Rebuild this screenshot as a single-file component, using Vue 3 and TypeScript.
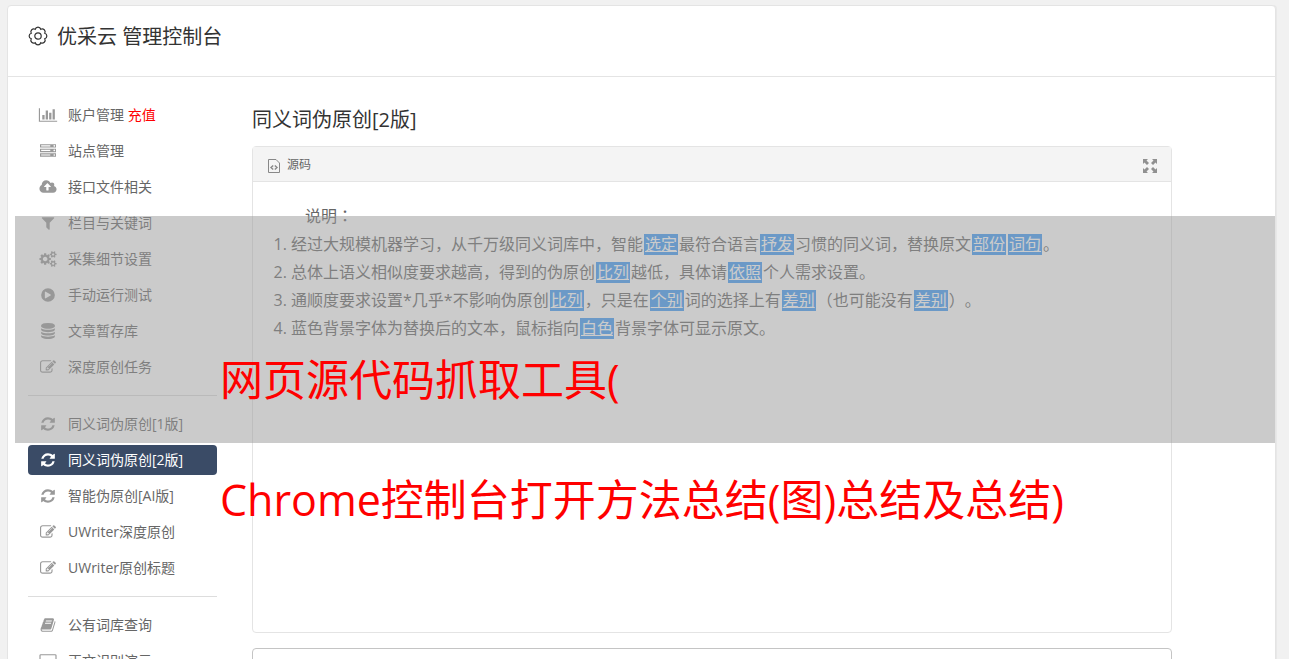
<script setup lang="ts">
interface Glyph { w: number; d: string }
interface MenuItem { label: string; icon: string; tag?: string; active?: boolean }
interface Piece { text: string; mark: boolean }

const glyphs: Record<string, Glyph> = {
  chart: { w: 2048, d: 'M640 896v512h-256v-512h256zm384-512v1024h-256v-1024h256zm1024 1152v128h-2048v-1536h128v1408h1920zm-640-896v768h-256v-768h256zm384-384v1152h-256v-1152h256z' },
  server: { w: 1792, d: 'M128 1408h1024v-128h-1024v128zm0-512h1024v-128h-1024v128zm1568 448q0-40-28-68t-68-28-68 28-28 68 28 68 68 28 68-28 28-68zm-1568-960h1024v-128h-1024v128zm1568 448q0-40-28-68t-68-28-68 28-28 68 28 68 68 28 68-28 28-68zm0-512q0-40-28-68t-68-28-68 28-28 68 28 68 68 28 68-28 28-68zm96 832v384h-1792v-384h1792zm0-512v384h-1792v-384h1792zm0-512v384h-1792v-384h1792z' },
  cloud: { w: 1920, d: 'M1280 864q0-14-9-23l-352-352q-9-9-23-9t-23 9l-351 351q-10 12-10 24 0 14 9 23t23 9h224v352q0 13 9.500 22.500t22.500 9.500h192q13 0 22.500-9.500t9.500-22.500v-352h224q13 0 22.500-9.500t9.500-22.500zm640 288q0 159-112.500 271.500t-271.500 112.500h-1088q-185 0-316.500-131.500t-131.500-316.500q0-130 70-240t188-165q-2-30-2-43 0-212 150-362t362-150q156 0 285.500 87t188.500 231q71-62 166-62 106 0 181 75t75 181q0 76-41 138 130 31 213.500 135.500t83.500 238.500z' },
  filter: { w: 1792, d: 'M1595 295q17 41-14 70l-493 493v742q0 42-39 59-13 5-25 5-27 0-45-19l-256-256q-19-19-19-45v-486l-493-493q-31-29-14-70 17-39 59-39h1280q42 0 59 39z' },
  cogs: { w: 1920, d: 'M896 896q0-106-75-181t-181-75-181 75-75 181 75 181 181 75 181-75 75-181zm768 512q0-52-38-90t-90-38-90 38-38 90q0 53 37.500 90.500t90.500 37.500 90.500-37.500 37.500-90.500zm0-1024q0-52-38-90t-90-38-90 38-38 90q0 53 37.500 90.500t90.500 37.500 90.500-37.500 37.500-90.500zm-384 421v185q0 10-7 19.500t-16 10.500l-155 24q-11 35-32 76 34 48 90 115 7 10 7 20 0 12-7 19-23 30-82.500 89.500t-78.500 59.500q-11 0-21-7l-115-90q-37 19-77 31-11 108-23 155-7 24-30 24h-186q-11 0-20-7.500t-10-17.500l-23-153q-34-10-75-31l-118 89q-7 7-20 7-11 0-21-8-144-133-144-160 0-9 7-19 10-14 41-53t47-61q-23-44-35-82l-152-24q-10-1-17-9.500t-7-19.500v-185q0-10 7-19.500t16-10.500l155-24q11-35 32-76-34-48-90-115-7-11-7-20 0-12 7-20 22-30 82-89t79-59q11 0 21 7l115 90q34-18 77-32 11-108 23-154 7-24 30-24h186q11 0 20 7.500t10 17.500l23 153q34 10 75 31l118-89q8-7 20-7 11 0 21 8 144 133 144 160 0 9-7 19-12 16-42 54t-45 60q23 48 34 82l152 23q10 2 17 10.500t7 19.500zm640 533v140q0 16-149 31-12 27-30 52 51 113 51 138 0 4-4 7-122 71-124 71-8 0-46-47t-52-68q-20 2-30 2t-30-2q-14 21-52 68t-46 47q-2 0-124-71-4-3-4-7 0-25 51-138-18-25-30-52-149-15-149-31v-140q0-16 149-31 13-29 30-52-51-113-51-138 0-4 4-7 4-2 35-20t59-34 30-16q8 0 46 46.500t52 67.500q20-2 30-2t30 2q51-71 92-112l6-2q4 0 124 70 4 3 4 7 0 25-51 138 17 23 30 52 149 15 149 31zm0-1024v140q0 16-149 31-12 27-30 52 51 113 51 138 0 4-4 7-122 71-124 71-8 0-46-47t-52-68q-20 2-30 2t-30-2q-14 21-52 68t-46 47q-2 0-124-71-4-3-4-7 0-25 51-138-18-25-30-52-149-15-149-31v-140q0-16 149-31 13-29 30-52-51-113-51-138 0-4 4-7 4-2 35-20t59-34 30-16q8 0 46 46.500t52 67.500q20-2 30-2t30 2q51-71 92-112l6-2q4 0 124 70 4 3 4 7 0 25-51 138 17 23 30 52 149 15 149 31z' },
  play: { w: 1792, d: 'M896 128a768 768 0 1 1 0 1536a768 768 0 1 1 0-1536zM1184 951q32-18 32-55t-32-55l-544-320q-31-19-64-1-32 19-32 56v640q0 37 32 56 16 8 32 8 17 0 32-9z' },
  database: { w: 1792, d: 'M896 768q237 0 443-43t325-127v170q0 69-103 128t-280 93.500-385 34.500-385-34.500-280-93.500-103-128v-170q119 84 325 127t443 43zm0 768q237 0 443-43t325-127v170q0 69-103 128t-280 93.500-385 34.500-385-34.500-280-93.500-103-128v-170q119 84 325 127t443 43zm0-384q237 0 443-43t325-127v170q0 69-103 128t-280 93.500-385 34.500-385-34.500-280-93.500-103-128v-170q119 84 325 127t443 43zm0-1152q208 0 385 34.500t280 93.500 103 128v128q0 69-103 128t-280 93.500-385 34.500-385-34.500-280-93.500-103-128v-128q0-69 103-128t280-93.500 385-34.500z' },
  edit: { w: 1792, d: 'M888 1184l116-116-152-152-116 116v56h96v96h56zm440-720q-16-16-33 1l-350 350q-17 17-1 33t33-1l350-350q17-17 1-33zm80 594v190q0 119-84.500 203.500t-203.500 84.500h-832q-119 0-203.500-84.500t-84.500-203.500v-832q0-119 84.500-203.500t203.500-84.500h832q63 0 117 25 15 7 18 23 3 17-9 29l-49 49q-14 14-32 8-23-6-45-6h-832q-66 0-113 47t-47 113v832q0 66 47 113t113 47h832q66 0 113-47t47-113v-126q0-13 9-22l64-64q15-15 35-7t20 29zm-96-738l288 288-672 672h-288v-288zm444 132l-92 92-288-288 92-92q28-28 68-28t68 28l152 152q28 28 28 68t-28 68z' },
  refresh: { w: 1792, d: 'M1639 1056q0 5-1 7-64 268-268 434.500t-478 166.500q-146 0-282.500-55t-243.500-157l-129 129q-19 19-45 19t-45-19-19-45v-448q0-26 19-45t45-19h448q26 0 45 19t19 45-19 45l-137 137q71 66 161 102t187 36q134 0 250-65t186-179q11-17 53-117 8-23 30-23h192q13 0 22.500 9.500t9.500 22.500zm25-800v448q0 26-19 45t-45 19h-448q-26 0-45-19t-19-45 19-45l138-138q-148-137-349-137-134 0-250 65t-186 179q-11 17-53 117-8 23-30 23h-199q-13 0-22.500-9.500t-9.500-22.500v-7q65-268 270-434.500t480-166.500q146 0 284 55.500t245 156.500l130-129q19-19 45-19t45 19 19 45z' },
  book: { w: 1792, d: 'M1703 478q40 57 18 129l-275 906q-19 64-76.500 107.500t-122.500 43.500h-923q-77 0-148.500-53.500t-99.500-131.500q-24-67-2-127 0-4 3-27t4-37q1-8-3-21.500t-3-19.500q2-11 8-21t16.500-23.500 16.500-23.500q23-38 45-91.500t30-91.500q3-10 .5-30t-.5-28q3-11 17-28t17-23q21-36 42-92t25-90q1-9-2.500-32t.5-28q4-13 22-30.500t22-22.500q19-26 42.500-84.500t27.500-96.500q1-8-3-25.500t-2-26.500q2-8 9-18t18-23 17-21q8-12 16.500-30.500t15-35 16-36 19.500-32 26.500-23.500 36-11.500 47.500 5.500l-1 3q38-9 51-9h761q74 0 114 56t18 130l-274 906q-36 119-71.500 153.500t-128.500 34.500h-869q-27 0-38 15-11 16-1 43 24 70 144 70h923q29 0 56-15.500t35-41.500l300-987q7-22 5-57 38 15 59 43zm-1064 2q-4 13 2 22.500t20 9.500h608q13 0 25.500-9.500t16.500-22.500l21-64q4-13-2-22.500t-20-9.500h-608q-13 0-25.500 9.500t-16.500 22.500zm-83 256q-4 13 2 22.500t20 9.500h608q13 0 25.500-9.500t16.500-22.500l21-64q4-13-2-22.500t-20-9.500h-608q-13 0-25.500 9.500t-16.500 22.500z' },
  screen: { w: 1920, d: 'M160 128h1600q66 0 113 47t47 113v1088q0 66-47 113t-113 47h-1600q-66 0-113-47t-47-113v-1088q0-66 47-113t113-47zM160 256q-32 0-32 32v1088q0 32 32 32h1600q32 0 32-32v-1088q0-32-32-32z' },
}

const groups: MenuItem[][] = [
  [
    { label: '账户管理', icon: 'chart', tag: '充值' },
    { label: '站点管理', icon: 'server' },
    { label: '接口文件相关', icon: 'cloud' },
    { label: '栏目与关键词', icon: 'filter' },
    { label: '采集细节设置', icon: 'cogs' },
    { label: '手动运行测试', icon: 'play' },
    { label: '文章暂存库', icon: 'database' },
    { label: '深度原创任务', icon: 'edit' },
  ],
  [
    { label: '同义词伪原创[1版]', icon: 'refresh' },
    { label: '同义词伪原创[2版]', icon: 'refresh', active: true },
    { label: '智能伪原创[AI版]', icon: 'refresh' },
    { label: 'UWriter深度原创', icon: 'edit' },
    { label: 'UWriter原创标题', icon: 'edit' },
  ],
  [
    { label: '公有词库查询', icon: 'book' },
    { label: '正文识别演示', icon: 'screen' },
  ],
]

// Words wrapped in braces are the replaced synonyms.
const parse = (line: string): Piece[] =>
  line.split(/(\{.+?\})/).filter(Boolean).map((s) =>
    s.startsWith('{') ? { text: s.slice(1, -1), mark: true } : { text: s, mark: false })

const notes: Piece[][] = [
  '经过大规模机器学习，从千万级同义词库中，智能{选定}最符合语言{抒发}习惯的同义词，替换原文{部份}{词句}。',
  '总体上语义相似度要求越高，得到的伪原创{比列}越低，具体请{依照}个人需求设置。',
  '通顺度要求设置*几乎*不影响伪原创{比列}，只是在{个别}词的选择上有{差别}（也可能没有{差别}）。',
  '蓝色背景字体为替换后的文本，鼠标指向{白色}背景字体可显示原文。',
].map(parse)

// Scalloped gear outline.
const lobes = 8
const gear = Array.from({ length: lobes }, (_, i) => {
  const at = (k: number) => {
    const a = ((k - 0.5) / lobes) * Math.PI * 2 - Math.PI / 2
    return `${(10 + 7.3 * Math.cos(a)).toFixed(2)} ${(10 + 7.3 * Math.sin(a)).toFixed(2)}`
  }
  return `${i === 0 ? `M${at(0)}` : ''}A2.9 2.9 0 0 1 ${at(i + 1)}`
}).join('') + 'z'
</script>

<template>
  <div class="page">
    <div class="card">
      <header class="head">
        <svg class="gear" viewBox="0 0 20 20" aria-hidden="true">
          <path :d="gear" />
          <circle cx="10" cy="10" r="3.2" />
        </svg>
        <h1>优采云 管理控制台</h1>
      </header>
      <div class="body">
        <nav class="side">
          <ul v-for="(group, g) in groups" :key="g">
            <li v-for="item in group" :key="item.label">
              <a href="#" :class="{ active: item.active }">
                <svg class="icon" :viewBox="`0 0 ${glyphs[item.icon].w} 1792`" aria-hidden="true">
                  <path fill-rule="evenodd" :d="glyphs[item.icon].d" />
                </svg>
                <span>{{ item.label }} <em v-if="item.tag">{{ item.tag }}</em></span>
              </a>
            </li>
          </ul>
        </nav>
        <main class="main">
          <h2>同义词伪原创[2版]</h2>
          <section class="panel">
            <div class="bar">
              <svg class="code" viewBox="0 0 12 14" aria-hidden="true">
                <path d="M.5.5h7.500l3.500 3.500v9.500h-11z" />
                <path class="angle" d="M5.200 6.500L3 8.500l2.200 2M6.800 6.500L9 8.500l-2.200 2" />
              </svg>
              <span>源码</span>
              <button type="button" aria-label="全屏">
                <svg viewBox="0 0 14 14" aria-hidden="true">
                  <path d="M0 0h5L3.500 1.500 6 4 4 6 1.500 3.500 0 5zM14 0v5l-1.500-1.500L10 6 8 4l2.500-2.500L9 0zM0 14V9l1.500 1.500L4 8l2 2-2.500 2.500L5 14zM14 14H9l1.500-1.500L8 10l2-2 2.500 2.500L14 9z" />
                </svg>
              </button>
            </div>
            <div class="content">
              <p>说明<span class="punct">：</span></p>
              <ol>
                <li v-for="(note, n) in notes" :key="n">
                  <template v-for="(piece, k) in note" :key="k"><u v-if="piece.mark">{{ piece.text }}</u><template v-else>{{ piece.text }}</template></template>
                </li>
              </ol>
            </div>
          </section>
          <textarea aria-label="内容"></textarea>
        </main>
      </div>
    </div>
    <div class="banner">
      <p>网页源代码抓取工具(</p>
      <p>Chrome控制台打开方法总结(图)总结及总结)</p>
    </div>
  </div>
</template>

<style>
body {
  margin: 0;
  background: #f1f1f1;
}
</style>

<style scoped>
* {
  box-sizing: border-box;
}
.page {
  position: relative;
  max-height: 100vh;
  overflow: hidden;
  padding: 5px 13px 0 7px;
  font-family: "Open Sans", "Noto Sans CJK SC", sans-serif;
  color: #666;
  font-size: 14px;
  text-spacing-trim: space-all;
}
.card {
  background: #fff;
  border: 1px solid #e4e4e4;
  border-radius: 4px;
  box-shadow: 1px 0 0 #e8e8e8;
}
h1, h2, p, ul, ol {
  margin: 0;
  padding: 0;
  font-weight: 400;
}
.head {
  display: flex;
  align-items: flex-start;
  gap: 9px;
  height: 71px;
  padding: 16px 20px;
  border-bottom: 1px solid #e4e4e4;
}
.gear {
  width: 20px;
  height: 28px;
  fill: none;
  stroke: #333;
  stroke-width: 1.2;
}
h1, h2 {
  font-size: 20px;
  line-height: 30px;
  color: #333;
}
.body {
  display: flex;
  align-items: flex-start;
  gap: 35px;
  padding: 23px 103px 20px 20px;
}
.side {
  flex: 0 0 189px;
}
.side ul {
  display: flex;
  flex-direction: column;
  gap: 6px;
  list-style: none;
}
.side ul + ul {
  margin-top: 13px;
  border-top: 1px solid #ddd;
  padding-top: 13px;
}
.side a {
  display: flex;
  align-items: center;
  gap: 10px;
  height: 30px;
  padding: 0 10px;
  border-radius: 4px;
  color: #666;
  text-decoration: none;
  white-space: nowrap;
}
.side span {
  padding-bottom: 2px;
}
.side em {
  font-style: normal;
  color: #f00;
}
.icon {
  width: 20px;
  height: 16px;
  fill: #999;
}
.side .active {
  background: #3a4b66;
  color: #fff;
}
.active .icon {
  fill: #fff;
}
.main {
  flex: 1;
  min-width: 0;
}
h2 {
  margin: 5px 0 11px;
}
.panel {
  min-height: 487px;
  border: 1px solid #e4e4e4;
  border-radius: 4px;
}
.bar {
  display: flex;
  align-items: center;
  gap: 7px;
  height: 35px;
  padding: 0 14px 0 15px;
  background: #f4f4f4;
  border-bottom: 1px solid #e4e4e4;
  font-size: 12px;
}
.code {
  width: 12px;
  height: 14px;
  margin-top: 4px;
  fill: none;
  stroke: #888;
}
.angle {
  stroke-width: 1.4;
}
.bar button {
  display: flex;
  margin: 4px 0 0 auto;
  padding: 0;
  border: 0;
  background: none;
}
.bar button svg {
  width: 14px;
  height: 14px;
  fill: #909090;
}
.content {
  padding: 20px;
  font-size: 16px;
  line-height: 28px;
}
.content p {
  text-indent: 2em;
}
.content ol {
  padding-left: 18px;
}
.content u {
  margin: 0 1px;
  padding: 0 1px;
  background: linear-gradient(#3f9bf7, #3f9bf7) center / 100% 21px no-repeat;
  color: #fff;
}
.punct {
  font-family: "Noto Sans CJK TC", sans-serif;
  line-height: 1;
}
textarea {
  display: block;
  width: 100%;
  height: 120px;
  margin-top: 15px;
  border: 1px solid #c4c4c4;
  border-radius: 4px;
  resize: none;
}
.banner {
  position: absolute;
  top: 216px;
  left: 15px;
  right: 14px;
  height: 227px;
  padding: 104px 0 0 205px;
  background: rgba(151, 151, 151, 0.5);
  color: #f00;
  font-size: 43px;
  line-height: 120px;
  white-space: nowrap;
}
</style>
